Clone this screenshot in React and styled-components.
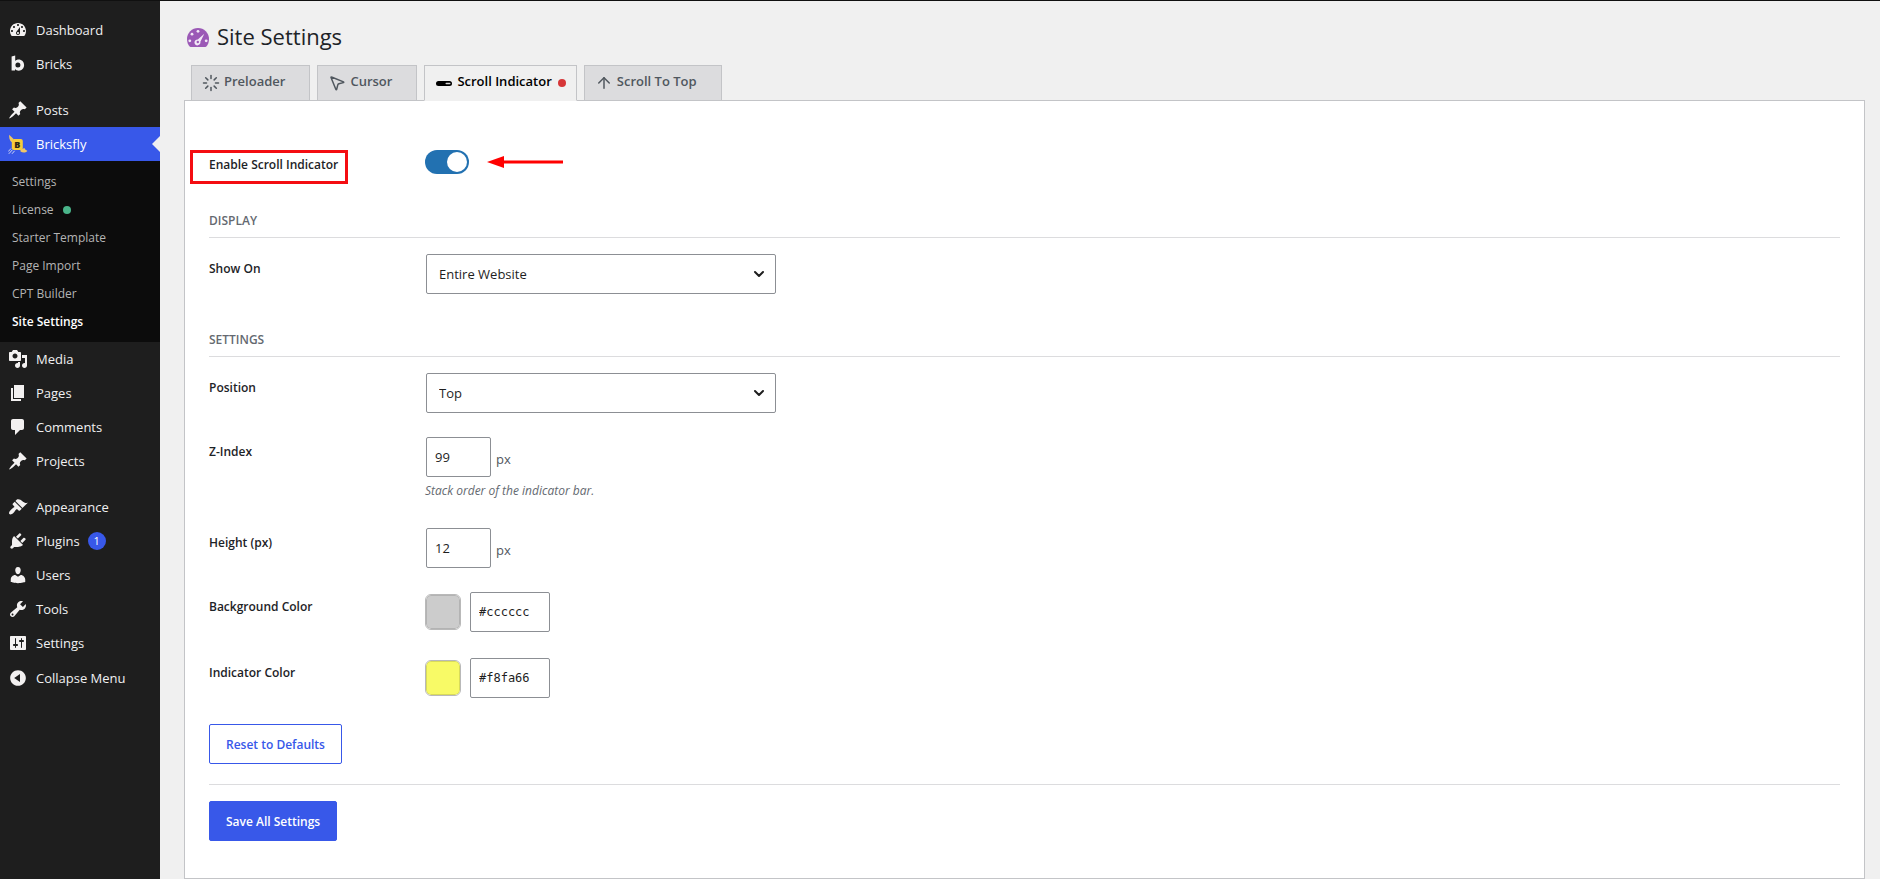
import React, { useState } from "react";
import styled, { createGlobalStyle, css } from "styled-components";
import { ArrowUp, ChevronDown, Loader, MousePointer2 } from "lucide-react";

const GlobalStyle = createGlobalStyle`
  *,
  *::before,
  *::after {
    box-sizing: border-box;
  }

  body {
    margin: 0;
    background: #f0f0f0;
    color: #1d2327;
    font-family: "Segoe UI", "Open Sans", "Noto Sans", sans-serif;
    font-size: 13px;
    line-height: 20px;
  }

  button,
  input,
  select {
    font-family: inherit;
  }
`;

const Page = styled.div`
  display: flex;
  min-height: 100vh;
  border-top: 1px solid #101010;
`;

const Sidebar = styled.nav`
  flex: 0 0 160px;
  padding-top: 12px;
  background: #1e1e1e;
`;

const MenuList = styled.ul`
  list-style: none;
  margin: 0 0 12px;
  padding: 0;

  &:last-of-type {
    margin-bottom: 0;
  }
`;

const menuRow = css`
  display: flex;
  align-items: center;
  gap: 8px;
  width: 100%;
  height: 34px;
  padding: 0 0 0 8px;
  border: none;
  background: none;
  color: #f0f0f1;
  font-size: 13px;
  text-decoration: none;
  cursor: pointer;
`;

const MenuLink = styled.a`
  ${menuRow}
  ${(props) =>
    props.$active &&
    css`
      background: #3858e9;
      color: #fff;
    `}
`;

const CollapseButton = styled.button`
  ${menuRow}
  height: 36px;
`;

const ActiveNotch = styled.span`
  margin-left: auto;
  border: 8px solid transparent;
  border-left: none;
  border-right-color: #f0f0f0;
`;

const MenuSvg = styled.svg`
  flex: none;
  width: 20px;
  height: 20px;
  fill: #f3f1f1;
`;

const CountBadge = styled.span`
  width: 18px;
  height: 18px;
  border-radius: 9px;
  background: #3858e9;
  color: #fff;
  font-size: 11px;
  line-height: 18px;
  text-align: center;
`;

const SubMenu = styled.ul`
  list-style: none;
  margin: 0;
  padding: 7px 0 6px;
  background: #0c0c0c;
`;

const SubLink = styled.a`
  display: flex;
  align-items: center;
  gap: 9px;
  height: 28px;
  padding: 0 12px;
  color: ${(props) => (props.$current ? "#fff" : "#b4b4b4")};
  font-size: 12px;
  font-weight: ${(props) => (props.$current ? 600 : 400)};
  text-decoration: none;
`;

const Dot = styled.span`
  width: 8px;
  height: 8px;
  border-radius: 50%;
  background: ${(props) => props.$color};
`;

const Main = styled.main`
  flex: 1;
  min-width: 0;
  padding: 18px 15px 1px 24px;
`;

const TitleRow = styled.header`
  display: flex;
  align-items: center;
  gap: 8px;
  height: 34px;
  padding-left: 3px;
`;

const Title = styled.h1`
  margin: 0;
  font-size: 22px;
  font-weight: 400;
  line-height: 34px;
`;

const TitleSvg = styled.svg`
  width: 22px;
  height: 20px;
  margin-top: 4px;
`;

const Tabs = styled.div`
  display: flex;
  gap: 7px;
  margin: 12px 7px -1px;
`;

const Tab = styled.button`
  display: flex;
  align-items: center;
  gap: 4px;
  height: 36px;
  padding: 0 10px 4px;
  border: 1px solid #c3c4c7;
  border-bottom-color: ${(props) => (props.$active ? "#f0f0f0" : "#c3c4c7")};
  background: ${(props) => (props.$active ? "#f0f0f0" : "#dcdcde")};
  color: ${(props) => (props.$active ? "#000" : "#50575e")};
  font-size: 13px;
  font-weight: 600;
  cursor: pointer;

  svg {
    width: 18px;
    height: 18px;
    margin-top: 3px;
  }
`;

const TabDot = styled(Dot)`
  margin: 3px 0 0 2px;
  visibility: ${(props) => (props.$visible ? "visible" : "hidden")};
`;

const Panel = styled.form`
  padding: 36px 24px 37px;
  border: 1px solid #c3c4c7;
  background: #fff;
`;

const SectionTitle = styled.h2`
  margin: 24px 0 4px;
  padding-bottom: 6px;
  border-bottom: 1px solid #dcdcde;
  color: #646970;
  font-size: 12px;
  font-weight: 600;
  line-height: 20px;
  text-transform: uppercase;
`;

const Row = styled.div`
  display: grid;
  grid-template-columns: 216px 1fr;
  padding: 12px 0;
`;

const Label = styled.label`
  justify-self: start;
  padding-top: 5px;
  font-size: 12px;
  font-weight: 600;
`;

const Control = styled.div`
  display: flex;
  align-items: center;
`;

const MarkedLabel = styled.div`
  position: relative;
  justify-self: start;
  padding-top: 5px;

  &::after {
    content: "";
    position: absolute;
    inset: 1px -10px -9px -19px;
    border: 3px solid #f40d12;
    pointer-events: none;
  }

  ${Label} {
    padding: 0;
  }
`;

const Toggle = styled.input`
  appearance: none;
  display: flex;
  align-items: center;
  width: 44px;
  height: 24px;
  margin: 0;
  padding: 2px;
  border-radius: 12px;
  background: #8c8f94;
  cursor: pointer;

  &::before {
    content: "";
    width: 20px;
    height: 20px;
    border-radius: 50%;
    background: #fff;
  }

  &:checked {
    justify-content: flex-end;
    background: #2271b1;
  }
`;

const PointerArrow = styled.svg`
  width: 77px;
  height: 14px;
  margin-left: 18px;
`;

const field = css`
  height: 40px;
  border: 1px solid #8c8f94;
  border-radius: 2px;
  background: #fff;
  color: #1e1e1e;
  font-size: 13px;
`;

const SelectWrap = styled.div`
  display: grid;
  width: 350px;
  margin-left: 1px;
  align-items: center;

  > * {
    grid-area: 1 / 1;
  }

  svg {
    justify-self: end;
    width: 16px;
    height: 16px;
    margin-right: 9px;
    color: #1e1e1e;
    pointer-events: none;
  }
`;

const Select = styled.select`
  ${field}
  appearance: none;
  width: 100%;
  padding: 0 24px 0 12px;
`;

const NumberInput = styled.input`
  ${field}
  width: 65px;
  margin: 0 5px 0 1px;
  padding: 0 8px;
`;

const Unit = styled.span`
  padding-top: 3px;
  color: #50575e;
  font-size: 13px;
`;

const Help = styled.p`
  grid-column: 2;
  margin: 4px 0 3px;
  color: #646970;
  font-size: 12px;
  font-style: italic;
`;

const ColorControl = styled(Control)`
  gap: 9px;
  padding-bottom: 2px;
`;

const Swatch = styled.input`
  appearance: none;
  width: 36px;
  height: 36px;
  padding: 0;
  border: 1px solid #b9b9b9;
  border-radius: 6px;
  background: none;
  overflow: hidden;
  cursor: pointer;

  &::-webkit-color-swatch-wrapper {
    padding: 0;
  }

  &::-webkit-color-swatch {
    border: 1px solid rgba(0, 0, 0, 0.12);
    border-radius: 5px;
  }
`;

const HexInput = styled.input`
  ${field}
  width: 80px;
  padding: 0 8px;
  font-family: Consolas, "DejaVu Sans Mono", monospace;
  font-size: 12px;
`;

const Button = styled.button`
  height: 40px;
  padding: 0 16px;
  border: 1px solid #3858e9;
  border-radius: 2px;
  background: ${(props) => (props.$primary ? "#3858e9" : "#fff")};
  color: ${(props) => (props.$primary ? "#fff" : "#3858e9")};
  font-size: 12px;
  font-weight: 600;
  cursor: pointer;
`;

const Actions = styled.div`
  padding: 12px 0 20px;
`;

const SaveBar = styled.div`
  padding-top: 16px;
  border-top: 1px solid #dcdcde;
`;

const PATHS = {
  dashboard:
    "M3.76 16h12.48c1.1-1.37 1.76-3.11 1.76-5 0-4.42-3.58-8-8-8s-8 3.58-8 8c0 1.89.66 3.63 1.76 5zM10 4c.55 0 1 .45 1 1s-.45 1-1 1-1-.45-1-1 .45-1 1-1zM6 6c.55 0 1 .45 1 1s-.45 1-1 1-1-.45-1-1 .45-1 1-1zm8 0c.55 0 1 .45 1 1s-.45 1-1 1-1-.45-1-1 .45-1 1-1zm-5.37 5.55L12 7v6c0 1.1-.9 2-2 2s-2-.9-2-2c0-.57.24-1.08.63-1.45zM4 10c.55 0 1 .45 1 1s-.45 1-1 1-1-.45-1-1 .45-1 1-1zm12 0c.55 0 1 .45 1 1s-.45 1-1 1-1-.45-1-1 .45-1 1-1zm-5 3c0-.55-.45-1-1-1s-1 .45-1 1 .45 1 1 1 1-.45 1-1z",
  pin: "M10.44 3.02l1.82-1.82 6.36 6.35-1.83 1.82c-1.05-.68-2.48-.57-3.41.36l-.75.75c-.92.93-1.04 2.35-.35 3.41l-1.83 1.82-2.41-2.41-2.8 2.79c-.42.42-3.38 2.71-3.8 2.29s1.86-3.39 2.28-3.81l2.79-2.79L4.1 9.36l1.83-1.82c1.05.69 2.48.57 3.4-.36l.75-.75c.93-.92 1.05-2.35.36-3.41z",
  media:
    "M13 11V4c0-.55-.45-1-1-1h-1.67L9 1H5L3.67 3H2c-.55 0-1 .45-1 1v7c0 .55.45 1 1 1h10c.55 0 1-.45 1-1zM7 4.5c1.38 0 2.5 1.12 2.5 2.5S8.38 9.5 7 9.5 4.5 8.38 4.5 7 5.62 4.5 7 4.5zM14 6h5v10.5c0 1.38-1.12 2.5-2.5 2.5S14 17.88 14 16.5s1.12-2.5 2.5-2.5c.17 0 .34.02.5.05V9h-3V6zm-4 8.05V13h2v3.5c0 1.38-1.12 2.5-2.5 2.5S7 17.88 7 16.5 8.12 14 9.5 14c.17 0 .34.02.5.05z",
  page: "M6 15V2h10v13H6zm-1 1h8v2H3V5h2v11z",
  comments:
    "M5 2h9c1.1 0 2 .9 2 2v7c0 1.1-.9 2-2 2h-2l-5 5v-5H5c-1.1 0-2-.9-2-2V4c0-1.1.9-2 2-2z",
  appearance:
    "M14.48 11.06L7.41 3.99l1.5-1.5c.5-.56 2.3-.47 3.51.32 1.21.8 1.43 1.28 2.91 2.1 1.18.64 2.45 1.26 4.45.85zm-.71.71L6.7 4.7 4.93 6.47c-.39.39-.39 1.02 0 1.41l1.06 1.06c.39.39.39 1.03 0 1.42-.6.6-1.43 1.11-2.21 1.69-.35.26-.7.53-1.01.84C1.43 14.23.4 16.08 1.4 17.07c.99 1 2.84-.03 4.18-1.36.31-.31.58-.66.85-1.02.57-.78 1.08-1.61 1.69-2.21.39-.39 1.02-.39 1.41 0l1.06 1.06c.39.39 1.02.39 1.41 0z",
  plugins:
    "M13.11 4.36L9.87 7.6 8 5.73l3.24-3.24c.35-.34 1.05-.2 1.56.32.52.51.66 1.21.31 1.55zm-8 1.77l.91-1.12 9.01 9.01-1.19.84c-.71.71-2.63 1.16-3.82 1.16H6.14L4.9 17.26c-.59.59-1.54.59-2.12 0-.59-.58-.59-1.53 0-2.12l1.24-1.24v-3.88c0-1.13.4-3.19 1.09-3.89zm7.26 3.97l3.24-3.24c.34-.35 1.04-.21 1.55.31.52.51.66 1.21.31 1.55l-3.24 3.25z",
  users:
    "M10 9.25c-2.27 0-2.73-3.44-2.73-3.44C7 4.02 7.82 2 9.97 2c2.16 0 2.98 2.02 2.71 3.81 0 0-.41 3.44-2.68 3.44zm0 2.57L12.72 10c2.39 0 4.52 2.33 4.52 4.53v2.49s-3.65 1.13-7.24 1.13c-3.65 0-7.24-1.13-7.24-1.13v-2.49c0-2.25 1.94-4.48 4.47-4.48z",
  tools:
    "M16.68 9.77c-1.34 1.34-3.3 1.67-4.95.99l-5.41 6.52c-.99.99-2.59.99-3.58 0s-.99-2.59 0-3.57l6.52-5.42c-.68-1.65-.35-3.61.99-4.95 1.28-1.28 3.12-1.62 4.72-1.06l-2.89 2.89 2.82 2.82 2.86-2.87c.53 1.58.18 3.39-1.08 4.65zM3.81 16.21c.4.39 1.04.39 1.43 0 .4-.4.4-1.04 0-1.43-.39-.4-1.03-.4-1.43 0-.39.39-.39 1.03 0 1.43z",
  settings:
    "M18 16V4c0-.55-.45-1-1-1H3c-.55 0-1 .45-1 1v12c0 .55.45 1 1 1h14c.55 0 1-.45 1-1zM8 11h1c.55 0 1 .45 1 1s-.45 1-1 1H8v1.5c0 .28-.22.5-.5.5s-.5-.22-.5-.5V13H6c-.55 0-1-.45-1-1s.45-1 1-1h1V5.5c0-.28.22-.5.5-.5s.5.22.5.5V11zm5-2h-1c-.55 0-1-.45-1-1s.45-1 1-1h1V5.5c0-.28.22-.5.5-.5s.5.22.5.5V7h1c.55 0 1 .45 1 1s-.45 1-1 1h-1v5.5c0 .28-.22.5-.5.5s-.5-.22-.5-.5V9z",
  collapse:
    "M10 2.16c4.33 0 7.84 3.51 7.84 7.84s-3.51 7.84-7.84 7.84S2.16 14.33 2.16 10 5.71 2.16 10 2.16zm2 11.72V6.12L6.18 9.97z",
};

function MenuIcon({ name }) {
  return (
    <MenuSvg viewBox="0 0 20 20" aria-hidden="true">
      <path d={PATHS[name]} />
    </MenuSvg>
  );
}

function BricksLogo() {
  return (
    <MenuSvg viewBox="0 0 20 20" aria-hidden="true">
      <path
        fillRule="evenodd"
        d="M3.6 2.4L7.2 1.6V7c.9-1 2.1-1.5 3.5-1.5 3.100 0 5.400 2.400 5.400 5.600s-2.300 5.600-5.400 5.600c-1.500 0-2.800-.6-3.700-1.700v1.400H3.600zM9.900 8.600a2.500 2.500 0 1 0 0 5 2.500 2.500 0 0 0 0-5z"
      />
    </MenuSvg>
  );
}

function BricksflyLogo() {
  return (
    <MenuSvg viewBox="0 0 20 20" aria-hidden="true">
      <path fill="#f0c667" d="M1.200.8l4.300 4.300-1.900 3.200C1.600 6.500.900 3.800 1.200.8z" />
      <path fill="#f0c667" d="M12.500 15.500l4-1.500c.3 1.700 1.700 1.900 2.900 3-2 1.900-4.600 1.900-6.900.6z" />
      <path
        fill="none"
        stroke="#cdd3f2"
        strokeWidth="1"
        d="M.3 17.500l2.700-3M.8 19.800l3.600-4M4 19.800l2.600-3"
      />
      <rect x="3.800" y="5" width="11" height="11" rx="2" fill="#f6cc3c" />
      <text
        x="9.300"
        y="13.700"
        textAnchor="middle"
        fontSize="9"
        fontWeight="800"
        fill="#2a2415"
      >
        B
      </text>
    </MenuSvg>
  );
}

function GaugeIcon() {
  return (
    <TitleSvg viewBox="0 0 22 20" aria-hidden="true">
      <path
        fill="#9b59b6"
        d="M11 0a11 11 0 0 1 11 11c0 3-1 5.800-2.600 7.600-.3.300-.6.400-1 .4H3.600c-.4 0-.7-.1-1-.4C1 16.800 0 14 0 11A11 11 0 0 1 11 0z"
      />
      <g fill="#f3e9f7">
        <circle cx="11" cy="3.300" r="1.400" />
        <circle cx="5" cy="6.200" r="1.400" />
        <circle cx="2.800" cy="12.800" r="1.400" />
        <circle cx="19.200" cy="12.800" r="1.400" />
        <path d="M17.300 5.800l-3.900 7.900a3 3 0 1 1-2.600-2.300z" />
      </g>
      <circle cx="10.800" cy="14" r="1.200" fill="#9b59b6" />
    </TitleSvg>
  );
}

function BarIcon() {
  return (
    <svg viewBox="0 0 18 18" aria-hidden="true">
      <rect x="1" y="7" width="16" height="5" rx="2.500" />
      <rect x="10.500" y="8.700" width="5" height="1.600" rx=".8" fill="#d8d8d8" />
    </svg>
  );
}

const MENU_TOP = [
  { label: "Dashboard", icon: <MenuIcon name="dashboard" /> },
  { label: "Bricks", icon: <BricksLogo /> },
];

const MENU_CONTENT = [
  { label: "Posts", icon: <MenuIcon name="pin" /> },
  {
    label: "Bricksfly",
    icon: <BricksflyLogo />,
    active: true,
    children: [
      { label: "Settings" },
      { label: "License", dot: "#4ab58a" },
      { label: "Starter Template" },
      { label: "Page Import" },
      { label: "CPT Builder" },
      { label: "Site Settings", current: true },
    ],
  },
  { label: "Media", icon: <MenuIcon name="media" /> },
  { label: "Pages", icon: <MenuIcon name="page" /> },
  { label: "Comments", icon: <MenuIcon name="comments" /> },
  { label: "Projects", icon: <MenuIcon name="pin" /> },
];

const MENU_ADMIN = [
  { label: "Appearance", icon: <MenuIcon name="appearance" /> },
  { label: "Plugins", icon: <MenuIcon name="plugins" />, count: 1 },
  { label: "Users", icon: <MenuIcon name="users" /> },
  { label: "Tools", icon: <MenuIcon name="tools" /> },
  { label: "Settings", icon: <MenuIcon name="settings" /> },
];

const TABS = [
  { label: "Preloader", icon: <Loader /> },
  { label: "Cursor", icon: <MousePointer2 /> },
  { label: "Scroll Indicator", icon: <BarIcon />, enabled: true },
  { label: "Scroll To Top", icon: <ArrowUp /> },
];

function Menu({ items }) {
  return (
    <MenuList>
      {items.map((item) => (
        <li key={item.label}>
          <MenuLink href="#" $active={item.active}>
            {item.icon}
            <span>{item.label}</span>
            {item.count && <CountBadge>{item.count}</CountBadge>}
            {item.active && <ActiveNotch />}
          </MenuLink>
          {item.children && (
            <SubMenu>
              {item.children.map((child) => (
                <li key={child.label}>
                  <SubLink href="#" $current={child.current}>
                    {child.label}
                    {child.dot && <Dot $color={child.dot} />}
                  </SubLink>
                </li>
              ))}
            </SubMenu>
          )}
        </li>
      ))}
    </MenuList>
  );
}

function SelectRow({ id, label, options }) {
  return (
    <Row>
      <Label htmlFor={id}>{label}</Label>
      <Control>
        <SelectWrap>
          <Select id={id}>
            {options.map((option) => (
              <option key={option}>{option}</option>
            ))}
          </Select>
          <ChevronDown strokeWidth={3} />
        </SelectWrap>
      </Control>
    </Row>
  );
}

function NumberRow({ id, label, value, help }) {
  return (
    <Row>
      <Label htmlFor={id}>{label}</Label>
      <Control>
        <NumberInput id={id} inputMode="numeric" defaultValue={value} />
        <Unit>px</Unit>
      </Control>
      {help && <Help>{help}</Help>}
    </Row>
  );
}

function ColorRow({ id, label, value, onChange }) {
  return (
    <Row>
      <Label htmlFor={id}>{label}</Label>
      <ColorControl>
        <Swatch
          type="color"
          aria-label={`${label} picker`}
          value={value}
          onChange={(e) => onChange(e.target.value)}
        />
        <HexInput
          id={id}
          value={value}
          onChange={(e) => onChange(e.target.value)}
        />
      </ColorControl>
    </Row>
  );
}

function App() {
  const [tab, setTab] = useState("Scroll Indicator");
  const [enabled, setEnabled] = useState(true);
  const [background, setBackground] = useState("#cccccc");
  const [indicator, setIndicator] = useState("#f8fa66");

  const reset = () => {
    setBackground("#cccccc");
    setIndicator("#f8fa66");
  };

  return (
    <>
      <GlobalStyle />
      <Page>
        <Sidebar>
          <Menu items={MENU_TOP} />
          <Menu items={MENU_CONTENT} />
          <Menu items={MENU_ADMIN} />
          <CollapseButton type="button">
            <MenuIcon name="collapse" />
            Collapse Menu
          </CollapseButton>
        </Sidebar>
        <Main>
          <TitleRow>
            <GaugeIcon />
            <Title>Site Settings</Title>
          </TitleRow>
          <Tabs role="tablist">
            {TABS.map(({ label, icon, enabled: on }) => (
              <Tab
                key={label}
                type="button"
                role="tab"
                aria-selected={tab === label}
                $active={tab === label}
                onClick={() => setTab(label)}
              >
                {icon}
                {label}
                <TabDot $color="#d63638" $visible={on} />
              </Tab>
            ))}
          </Tabs>
          <Panel onSubmit={(e) => e.preventDefault()}>
            <Row>
              <MarkedLabel>
                <Label htmlFor="enable">Enable Scroll Indicator</Label>
              </MarkedLabel>
              <Control>
                <Toggle
                  id="enable"
                  type="checkbox"
                  role="switch"
                  checked={enabled}
                  onChange={(e) => setEnabled(e.target.checked)}
                />
                <PointerArrow viewBox="0 0 77 14" aria-hidden="true">
                  <path d="M0 7L17 1v12z" fill="#f00" />
                  <path d="M16 7h60" stroke="#f00" strokeWidth="3" />
                </PointerArrow>
              </Control>
            </Row>

            <SectionTitle>Display</SectionTitle>
            <SelectRow
              id="show-on"
              label="Show On"
              options={["Entire Website", "Specific Pages"]}
            />

            <SectionTitle>Settings</SectionTitle>
            <SelectRow
              id="position"
              label="Position"
              options={["Top", "Bottom"]}
            />
            <NumberRow
              id="z-index"
              label="Z-Index"
              value="99"
              help="Stack order of the indicator bar."
            />
            <NumberRow id="height" label="Height (px)" value="12" />
            <ColorRow
              id="background"
              label="Background Color"
              value={background}
              onChange={setBackground}
            />
            <ColorRow
              id="indicator"
              label="Indicator Color"
              value={indicator}
              onChange={setIndicator}
            />

            <Actions>
              <Button type="button" onClick={reset}>
                Reset to Defaults
              </Button>
            </Actions>
            <SaveBar>
              <Button type="submit" $primary>
                Save All Settings
              </Button>
            </SaveBar>
          </Panel>
        </Main>
      </Page>
    </>
  );
}

export default App;
